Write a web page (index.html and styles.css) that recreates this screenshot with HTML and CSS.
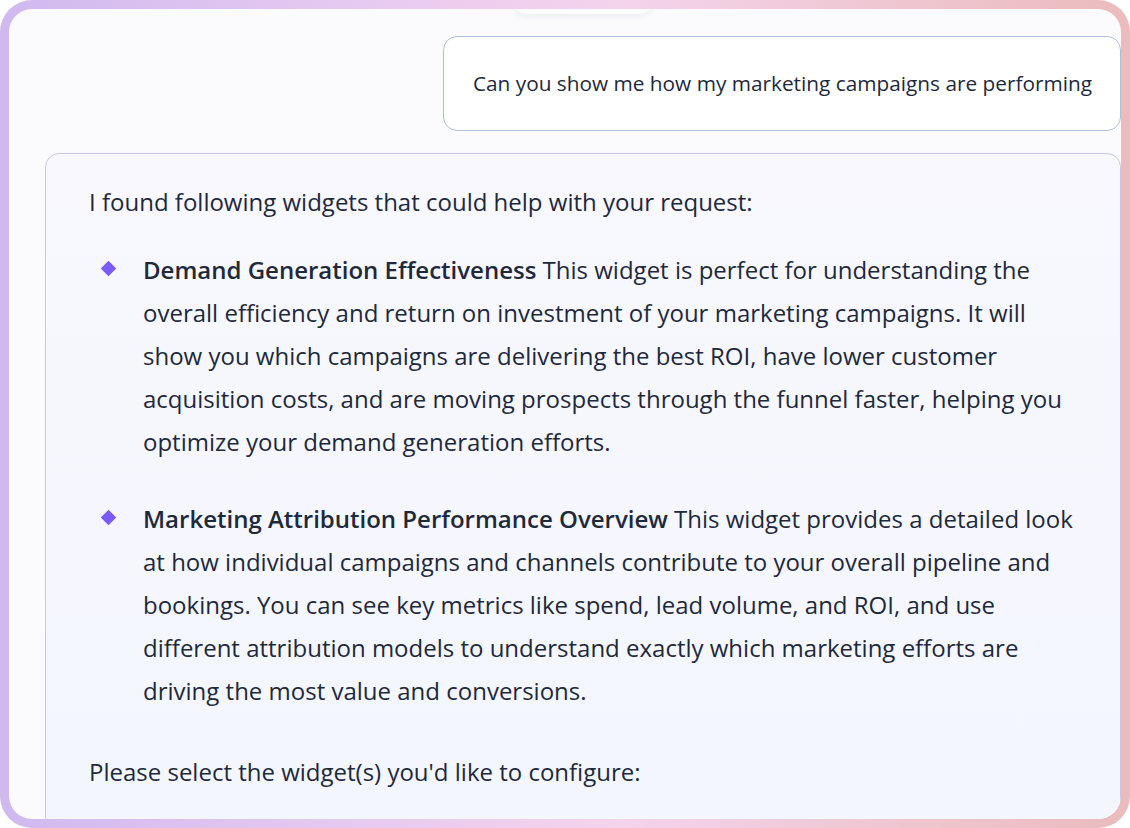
FILE: index.html
```html
<!DOCTYPE html>
<html lang="en">
<head>
<meta charset="utf-8">
<title>Chat</title>
<link rel="stylesheet" href="styles.css">
</head>
<body>
<div class="frame">
  <div class="screen">
    <div class="thread">
      <div class="prev-card"></div>
      <div class="msg-user">Can you show me how my marketing campaigns are performing</div>
      <div class="msg-assistant">
        <p class="intro">I found following widgets that could help with your request:</p>
        <ul class="widget-list">
          <li class="widget-item"><p class="widget-text"><strong>Demand Generation Effectiveness</strong> This widget is perfect for understanding the overall efficiency and return on investment of your marketing campaigns. It will show you which campaigns are delivering the best ROI, have lower customer acquisition costs, and are moving prospects through the funnel faster, helping you optimize your demand generation efforts.</p></li>
          <li class="widget-item"><p class="widget-text"><strong>Marketing Attribution Performance Overview</strong> This widget provides a detailed look at how individual campaigns and channels contribute to your overall pipeline and bookings. You can see key metrics like spend, lead volume, and ROI, and use different attribution models to understand exactly which marketing efforts are driving the most value and conversions.</p></li>
        </ul>
        <p class="prompt">Please select the widget(s) you'd like to configure:</p>
      </div>
    </div>
  </div>
</div>
</body>
</html>
```
FILE: styles.css
```css
html, body {
  margin: 0;
  padding: 0;
  background: #ffffff;
}

body {
  font-family: "Open Sans", "Noto Sans", "Liberation Sans", sans-serif;
  color: #1e293b;
}

.frame {
  box-sizing: border-box;
  width: 1130px;
  height: 828px;
  padding: 9px;
  border-radius: 32px;
  background: linear-gradient(90deg, #d0b9ef 0%, #e6c9f1 30%, #f4d3ec 55%, #efc6d0 80%, #ebbbbd 100%);
}

.screen {
  width: 100%;
  height: 100%;
  border-radius: 23px;
  background: #fbfbfe;
  overflow: hidden;
}

.thread {
  display: flex;
  flex-direction: column;
  padding-left: 36px;
}

.prev-card {
  align-self: center;
  width: 140px;
  height: 40px;
  margin-top: -35px;
  background: #ffffff;
  border-radius: 0 0 14px 14px;
  box-shadow: 0 2px 6px rgba(30, 41, 80, 0.07);
}

.msg-user {
  align-self: flex-end;
  margin-top: 22px;
  padding: 29px 28px 29px 29px;
  font-size: 20.8px;
  line-height: 35px;
  background: #ffffff;
  border: 1px solid #adbed8;
  border-radius: 14px;
}

.msg-assistant {
  margin-top: 22px;
  padding: 26px 44px 80px 43px;
  border: 1px solid #c8c8e6;
  border-radius: 14px;
  background: linear-gradient(180deg, #f8f8fe 0%, #f3f6fd 100%);
  font-size: 24px;
  line-height: 43px;
}

.intro {
  margin: 0;
}

.widget-list {
  list-style: none;
  margin: 25px 0 0 0;
  padding: 0;
  display: flex;
  flex-direction: column;
  gap: 34px;
}

.widget-item {
  display: grid;
  grid-template-columns: 54px 1fr;
  align-items: start;
}

.widget-item::before {
  content: "";
  width: 11px;
  height: 11px;
  margin-top: 15px;
  margin-left: 14px;
  background: #7c5cf6;
  transform: rotate(45deg);
}

.widget-text {
  margin: 0;
}

.widget-text strong {
  font-weight: 600;
}

.prompt {
  margin: 38px 0 0 0;
}
```
